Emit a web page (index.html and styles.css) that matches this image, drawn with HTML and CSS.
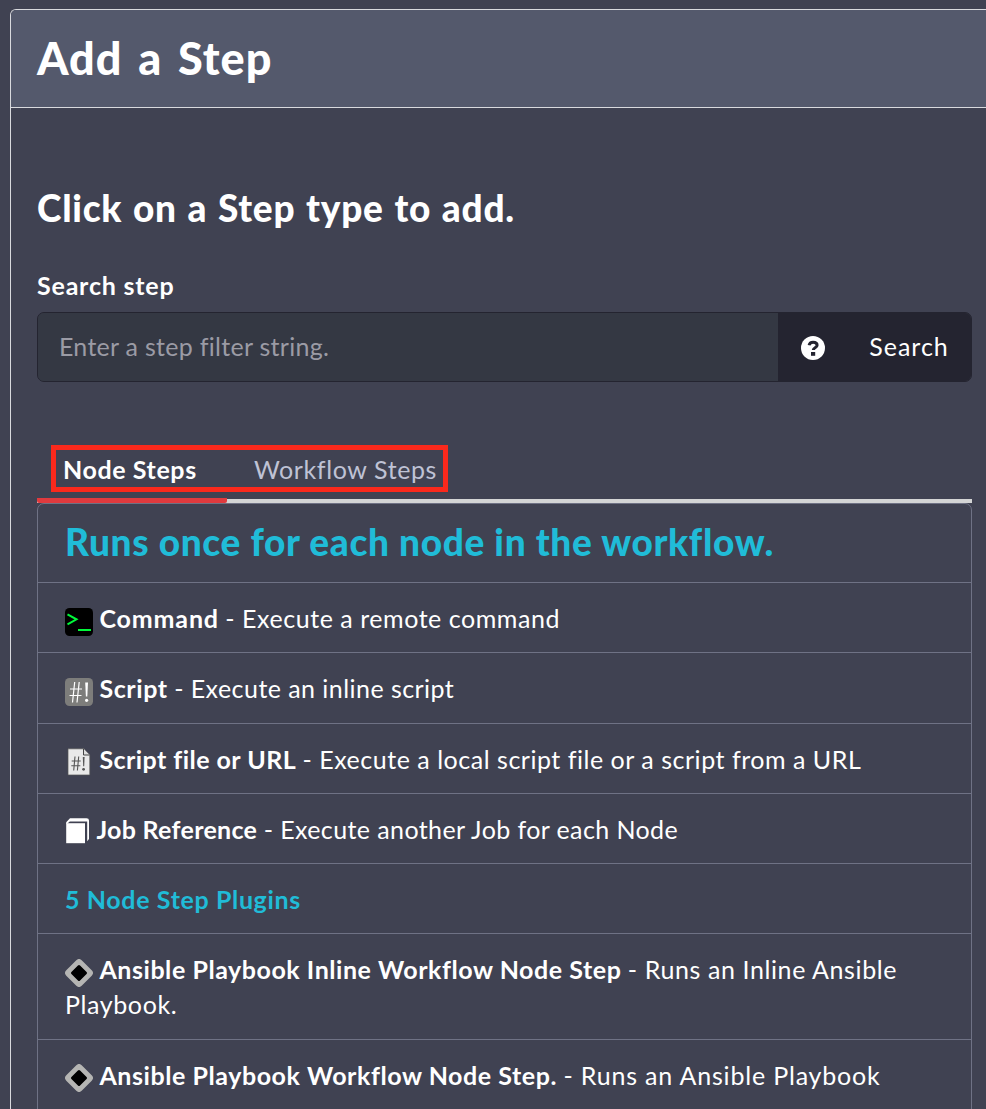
FILE: index.html
```
<!DOCTYPE html>
<html lang="en">
<head>
<meta charset="utf-8">
<title>Add a Step</title>
<link rel="stylesheet" href="styles.css">
</head>
<body>
<main class="panel">
  <header class="panel-header"><h1 class="title">Add a Step</h1></header>
  <div class="panel-body">
    <h2 class="subtitle">Click on a Step type to add.</h2>
    <label class="label" for="filter">Search step</label>
    <div class="search">
      <input class="search-input" id="filter" type="text" placeholder="Enter a step filter string.">
      <button class="search-help" aria-label="Help">
        <svg width="24" height="24" viewBox="0 0 24 24"><circle cx="12" cy="12" r="12" fill="#fff"/><path d="M8.1 9.3C8.5 7.2 9.9 6.2 12.1 6.2c2.4 0 4 1.1 4 3 0 2.7-3.8 2.4-3.8 4.9" fill="none" stroke="#242430" stroke-width="3"/><rect x="10" y="16" width="4.2" height="3.8" fill="#242430"/></svg>
      </button>
      <button class="search-button">Search</button>
    </div>
    <nav class="tabs">
      <a class="tab tab-active">Node Steps</a>
      <a class="tab tab-other">Workflow Steps</a>
      <span class="highlight"></span>
    </nav>
    <section class="list">
      <div class="row row-head"><h3 class="list-title">Runs once for each node in the workflow.</h3></div>
      <div class="row">
        <svg class="icon" viewBox="0 0 28 28"><rect width="28" height="28" rx="4.5" fill="#000"/><path d="M2.5 6.3l9 5-9 5" fill="none" stroke="#00f83a" stroke-width="2"/><path d="M13 22h13" stroke="#00f83a" stroke-width="2"/></svg>
        <b class="name name-command">Command</b> <span class="desc desc-command">- Execute a remote command</span>
      </div>
      <div class="row">
        <svg class="icon" viewBox="0 0 28 28"><rect width="28" height="28" rx="4.5" fill="#7d7d7b"/><path d="M9.7 4L7.5 24.5M14.2 4L12 24.5M5 11h12M4.5 17.5h12" fill="none" stroke="#fff" stroke-width="1.2"/><path d="M20.2 4.5h2.8l-.7 14h-1.4z" fill="#fff"/><circle cx="21.6" cy="22.3" r="1.6" fill="#fff"/></svg>
        <b class="name name-script">Script</b> <span class="desc desc-script">- Execute an inline script</span>
      </div>
      <div class="row">
        <svg class="icon" viewBox="0 0 28 28"><path d="M3 .8h16L24.8 7v20H3z" fill="#e9e9e9" stroke="#555" stroke-width=".7"/><path d="M18.5 1v6h6" fill="#ddd" stroke="#444" stroke-width="1"/><path d="M10 8.5L8.7 22.5M13.7 8.5l-1.3 14M6.7 13h9M6.3 17.7h9" fill="none" stroke="#555" stroke-width="1.1"/><path d="M17.8 9h1.8l-.4 9.3h-1z" fill="#555"/><circle cx="18.6" cy="21.3" r="1.4" fill="#555"/></svg>
        <b class="name name-file">Script file or URL</b> <span class="desc desc-file">- Execute a local script file or a script from a URL</span>
      </div>
      <div class="row">
        <svg class="icon icon-book" viewBox="0 0 25 28"><path d="M1.2 5.2h18.8v20H1.2z" fill="#fff"/><path d="M1.2 6V4.2L5 .2h16.5Q24 .2 24 2.6V21l-1.8 2.2V3.4H4.8L2.4 5.6z" fill="#fff"/></svg>
        <b class="name name-job">Job Reference</b> <span class="desc desc-job">- Execute another Job for each Node</span>
      </div>
      <div class="row"><b class="name plugins">5 Node Step Plugins</b></div>
      <div class="row">
        <svg class="icon" viewBox="0 0 28 28"><rect x="3.1" y="3.1" width="21.8" height="21.8" rx="3.8" transform="rotate(45 14 14)" fill="#b5b5b3"/><rect x="7.9" y="7.9" width="12.2" height="12.2" rx="1.5" transform="rotate(45 14 14)" fill="#000"/></svg>
        <b class="name name-inline">Ansible Playbook Inline Workflow Node Step</b> <span class="desc desc-inline">- Runs an Inline Ansible Playbook.</span>
      </div>
      <div class="row row-last">
        <svg class="icon" viewBox="0 0 28 28"><rect x="3.1" y="3.1" width="21.8" height="21.8" rx="3.8" transform="rotate(45 14 14)" fill="#b5b5b3"/><rect x="7.9" y="7.9" width="12.2" height="12.2" rx="1.5" transform="rotate(45 14 14)" fill="#000"/></svg>
        <b class="name name-playbook">Ansible Playbook Workflow Node Step.</b> <span class="desc desc-playbook">- Runs an Ansible Playbook</span>
      </div>
    </section>
  </div>
</main>
</body>
</html>
```
FILE: styles.css
```
* { box-sizing: border-box; }
html { overflow: hidden; }
body {
  margin: 0;
  padding: 9px 0 0 10px;
  height: 1109px;
  overflow: hidden;
  background: #404252;
  color: #fff;
  font-family: Lato, "Open Sans", sans-serif;
  font-size: 25px;
  line-height: 35px;
}
.panel {
  height: 1140px;
  border: 1px solid #d9dade;
  border-right: 0;
  border-top-left-radius: 6px;
  overflow: hidden;
}
.panel-header {
  height: 98px;
  padding: 18px 26px 0;
  background: #54596c;
  border-bottom: 1px solid #d9dade;
}
.title, .subtitle, .list-title { margin: 0; font-weight: 900; white-space: nowrap; }
.title { font-size: 45px; line-height: 60px; letter-spacing: 1px; word-spacing: 4px; }
.panel-body { padding: 75px 14px 0 26px; }
.subtitle { font-size: 37px; line-height: 50px; letter-spacing: .75px; word-spacing: 1.2px; }
.label {
  display: block;
  margin-top: 35px;
  height: 44px;
  font-weight: 700;
  letter-spacing: .8px;
}
.search {
  display: flex;
  height: 70px;
  background: #343743;
  border: 1px solid #242430;
  border-radius: 7px;
  overflow: hidden;
}
.search-input {
  flex: 1;
  min-width: 0;
  padding: 0 21px 2px;
  border: 0;
  background: #343843;
  color: #fff;
  font: inherit;
  letter-spacing: .28px;
}
.search-input::placeholder { color: #9b9ba5; opacity: 1; }
.search-help, .search-button {
  display: flex;
  align-items: center;
  justify-content: center;
  padding: 0;
  border: 0;
  background: #242430;
  color: #fff;
  font: inherit;
}
.search-help { width: 69px; padding-top: 1px; }
.search-button { width: 124px; padding-bottom: 2px; letter-spacing: 1px; }
.tabs {
  position: relative;
  display: flex;
  height: 121px;
  padding-top: 70px;
  background: linear-gradient(#d4d5d5, #d4d5d5) left bottom / 100% 4px no-repeat;
}
.tab { height: 51px; white-space: nowrap; letter-spacing: .6px; }
.tab-active { width: 190px; padding-left: 26px; font-weight: 700; border-bottom: 5px solid #e03a3e; border-radius: 2px; }
.tab-other { padding-left: 27px; color: #bfc2d5; }
.highlight {
  position: absolute;
  left: 14px;
  top: 63px;
  width: 397px;
  height: 47px;
  border: 5px solid #fa291c;
}
.list { border: 1px solid #6f7285; border-radius: 7px 7px 0 0; height: 660px; }
.row { padding: 18px 27px 16.3px; border-bottom: 1px solid #6f7285; }
.row-head { height: 79px; padding-top: 13px; }
.row-last { border-bottom: 0; }
.list-title { font-size: 37px; line-height: 50px; color: #20bcd8; letter-spacing: .65px; }
.icon { width: 28px; height: 28px; vertical-align: -7.5px; }
.icon-book { width: 25px; }
.name { font-weight: 700; }
.plugins { color: #20bcd8; letter-spacing: .63px; }
.name-command { letter-spacing: .86px; }
.desc-command { letter-spacing: .54px; }
.name-script { letter-spacing: .6px; }
.desc-script { letter-spacing: .45px; }
.name-file { letter-spacing: .45px; }
.desc-file { letter-spacing: .52px; }
.name-job { letter-spacing: .3px; }
.desc-job { letter-spacing: .4px; }
.name-inline { letter-spacing: .55px; }
.desc-inline { letter-spacing: .6px; }
.name-playbook { letter-spacing: .56px; }
.desc-playbook { letter-spacing: .82px; }
```
